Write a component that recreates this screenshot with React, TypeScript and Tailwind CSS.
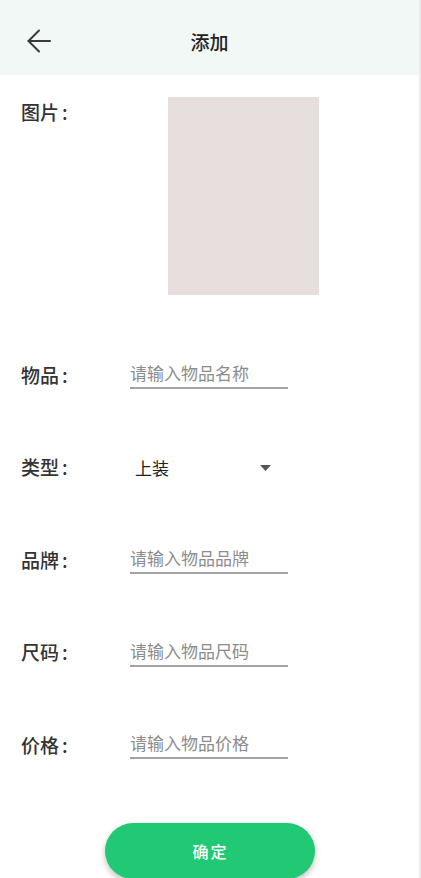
import type { ReactNode } from "react"

const font = { fontFamily: '"Noto Sans CJK SC", "Noto Sans", sans-serif' }

/** Back arrow in the top bar */
function BackArrow() {
  return (
    <svg width="26" height="26" viewBox="0 0 26 26" fill="none" stroke="#3a3a3a" strokeWidth="2" strokeLinecap="round" strokeLinejoin="round">
      <path d="M24 13H2.5" />
      <path d="M13 2.5 2.5 13 13 23.5" />
    </svg>
  )
}

/** Label text with its colon set a little apart, as in the design */
function Label({ text }: { text: string }) {
  return (
    <>
      {text}
      <span className="ml-[3px]">:</span>
    </>
  )
}

interface RowProps {
  label: string
  children: ReactNode
}

/** One labelled form row */
function Row({ label, children }: RowProps) {
  return (
    <div className="flex h-[46px] items-center">
      <span className="w-[130px] pl-[21px] text-[19px] font-medium text-[#333]">
        <Label text={label} />
      </span>
      {children}
    </div>
  )
}

function TextField({ placeholder }: { placeholder: string }) {
  return (
    <input
      placeholder={placeholder}
      className="h-[28px] w-[158px] border-b-2 border-[#a3a3a3] bg-transparent p-0 pb-[3px] text-[17px] leading-[22px] text-[#333] outline-none placeholder:text-[#8c8c8c]"
      style={font}
    />
  )
}

export default function App() {
  return (
    <div className="flex h-[878px] w-[421px] overflow-hidden bg-white" style={font}>
      <div className="flex w-[419px] flex-col">
        {/* Top bar */}
        <div className="relative flex h-[75px] shrink-0 items-center justify-center bg-[#f2f8f6]">
          <div className="absolute left-[26px] top-[28px]">
            <BackArrow />
          </div>
          <span className="mt-[9px] text-[19px] font-medium text-[#222]">添加</span>
        </div>

        {/* Picture */}
        <div className="flex pt-[22px]">
          <span className="w-[168px] pl-[21px] pt-[1px] text-[19px] font-medium leading-[28px] text-[#333]">
            <Label text="图片" />
          </span>
          <div className="h-[198px] w-[151px] bg-[#e7dfdd]" />
        </div>

        {/* Fields */}
        <div className="mt-[57px] flex flex-col gap-[46.5px]">
          <Row label="物品">
            <TextField placeholder="请输入物品名称" />
          </Row>
          <Row label="类型">
            <div className="flex w-[158px] items-center pl-[5px]">
              <span className="text-[17px] text-[#222]">上装</span>
              <svg className="ml-auto mr-[17px]" width="11" height="6" viewBox="0 0 11 6">
                <path d="M0 0h11L5.5 6z" fill="#555" />
              </svg>
            </div>
          </Row>
          <Row label="品牌">
            <TextField placeholder="请输入物品品牌" />
          </Row>
          <Row label="尺码">
            <TextField placeholder="请输入物品尺码" />
          </Row>
          <Row label="价格">
            <TextField placeholder="请输入物品价格" />
          </Row>
        </div>

        {/* Submit */}
        <button className="mx-auto mt-[55px] h-[56px] w-[210px] shrink-0 rounded-full bg-[#22c974] pl-[2px] text-[16px] font-medium tracking-[2px] text-white shadow-[0_3px_6px_rgba(0,0,0,0.25)]">
          确定
        </button>
      </div>
      <div className="h-full w-[2px] bg-[#ececec]" />
    </div>
  )
}
